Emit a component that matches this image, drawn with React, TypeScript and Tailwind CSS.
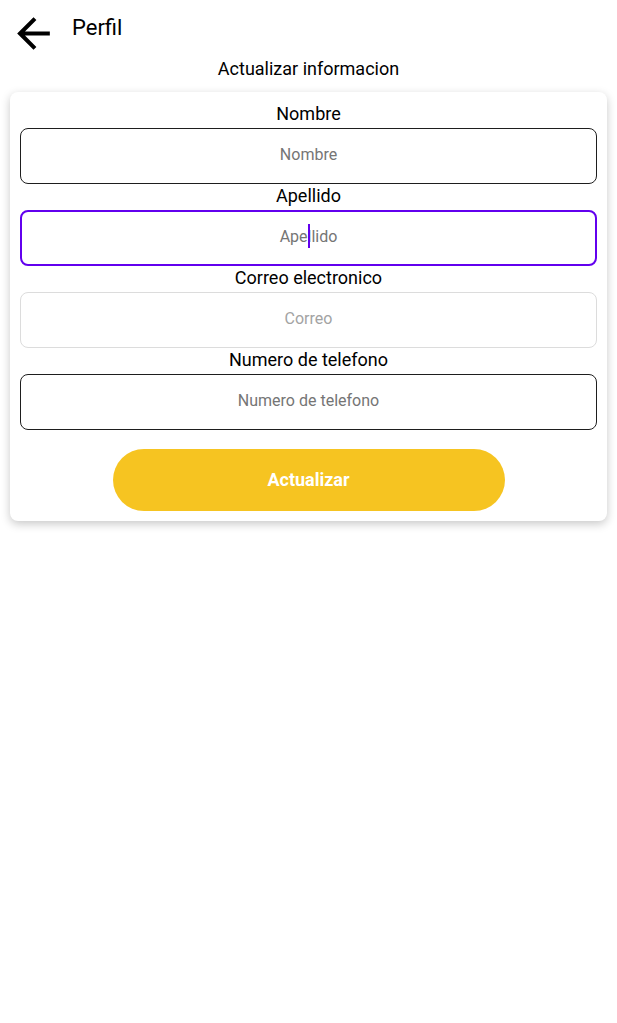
const font = { fontFamily: "Roboto, 'Liberation Sans', sans-serif" };

type FieldProps = {
  label: string;
  placeholder: string;
  state?: "normal" | "focused" | "disabled";
};

const Field = ({ label, placeholder, state = "normal" }: FieldProps) => {
  const box =
    state === "focused"
      ? "border-2 border-[#6200ee]"
      : state === "disabled"
        ? "border border-[#dcdcdc]"
        : "border border-[#1e1e1e]";
  const text = state === "disabled" ? "text-[#a3a3a3]" : "text-[#757575]";
  return (
    <div className="flex flex-col">
      <div className="flex h-[26px] items-start justify-center pt-[1px] text-[18px] leading-[22px] text-black">
        {label}
      </div>
      <div className={`relative flex h-[56px] items-center justify-center rounded-[8px] bg-white pb-[2px] ${box}`}>
        <span className={`text-[16px] ${text}`}>{placeholder}</span>
        {state === "focused" && (
          <span className="absolute left-1/2 top-[12px] h-[24px] w-[2px] -translate-x-1/2 bg-[#6200ee]" />
        )}
      </div>
    </div>
  );
};

export default function App() {
  return (
    <div className="min-h-[1023px] w-full bg-white" style={font}>
      {/* top bar */}
      <div className="flex h-[56px] items-center">
        <button aria-label="Volver" className="ml-[9px] mt-[10px] flex h-[49px] w-[49px] items-center justify-center">
          <svg width="49" height="49" viewBox="0 0 24 24" fill="#000">
            <path d="M20 11H7.83l5.59-5.59L12 4l-8 8 8 8 1.41-1.41L7.83 13H20v-2z" />
          </svg>
        </button>
        <span className="ml-[14px] -mt-[2px] text-[22px] text-black">Perfil</span>
      </div>

      <div className="flex h-[24px] items-center justify-center text-[18px] text-black">
        Actualizar informacion
      </div>

      <div className="mx-[10px] mt-[12px] rounded-[8px] bg-white px-[10px] pb-[10px] pt-[10px] shadow-[0_3px_10px_rgba(0,0,0,0.22)]">
        <Field label="Nombre" placeholder="Nombre" />
        <Field label="Apellido" placeholder="Apellido" state="focused" />
        <Field label="Correo electronico" placeholder="Correo" state="disabled" />
        <Field label="Numero de telefono" placeholder="Numero de telefono" />
        <div className="mt-[19px] flex justify-center">
          <button className="h-[62px] w-[392px] rounded-full bg-[#f6c421] pb-[2px] text-[18px] font-bold text-white">
            Actualizar
          </button>
        </div>
      </div>
    </div>
  );
}
